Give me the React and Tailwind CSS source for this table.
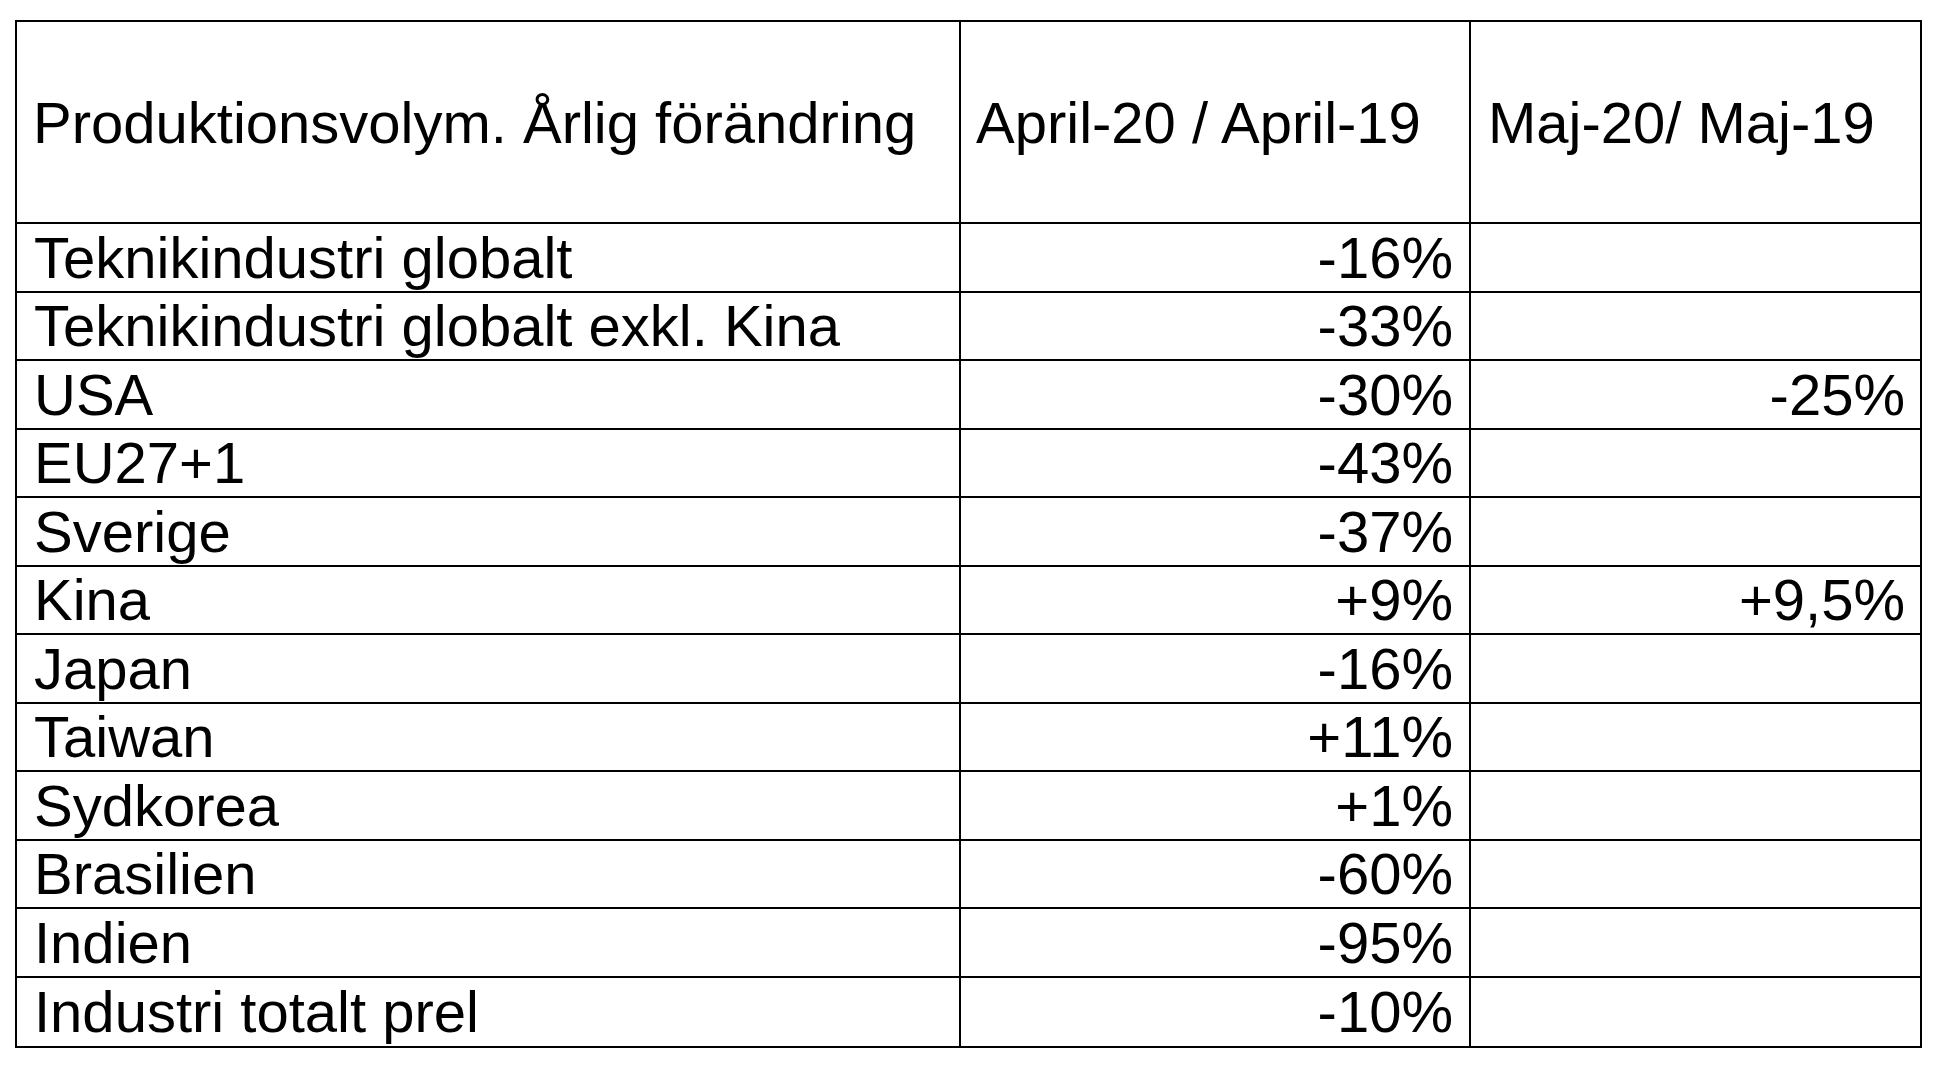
const rows = [
  ['Teknikindustri globalt', '-16%', ''],
  ['Teknikindustri globalt exkl. Kina', '-33%', ''],
  ['USA', '-30%', '-25%'],
  ['EU27+1', '-43%', ''],
  ['Sverige', '-37%', ''],
  ['Kina', '+9%', '+9,5%'],
  ['Japan', '-16%', ''],
  ['Taiwan', '+11%', ''],
  ['Sydkorea', '+1%', ''],
  ['Brasilien', '-60%', ''],
  ['Indien', '-95%', ''],
  ['Industri totalt prel', '-10%', ''],
]

export default function App() {
  return (
    <div className="min-h-screen bg-white pt-[20px] pl-[15px] text-black font-['Liberation_Sans',Arial,sans-serif] text-[58px]">
      <div className="w-[1907px] border-2 border-black">
        {/* header */}
        <div className="flex h-[202px] border-b-2 border-black">
          <div className="w-[944px] shrink-0 border-r-2 border-black flex items-center pl-[16px] whitespace-nowrap">
            Produktionsvolym. Årlig förändring
          </div>
          <div className="w-[510px] shrink-0 border-r-2 border-black flex items-center pl-[15px] whitespace-nowrap">
            April-20 / April-19
          </div>
          <div className="flex-1 flex items-center pl-[17px] whitespace-nowrap">
            Maj-20/ Maj-19
          </div>
        </div>

        {rows.map(([label, apr, maj], i) => (
          <div
            key={label}
            className={`flex h-[68.5px] ${i < rows.length - 1 ? 'border-b-2 border-black' : ''}`}
          >
            <div className="w-[944px] shrink-0 border-r-2 border-black flex items-center pl-[17px] whitespace-nowrap">
              {label}
            </div>
            <div className="w-[510px] shrink-0 border-r-2 border-black flex items-center justify-end pr-[16px]">
              {apr}
            </div>
            <div className="flex-1 flex items-center justify-end pr-[15px]">
              {maj}
            </div>
          </div>
        ))}
      </div>
    </div>
  )
}
